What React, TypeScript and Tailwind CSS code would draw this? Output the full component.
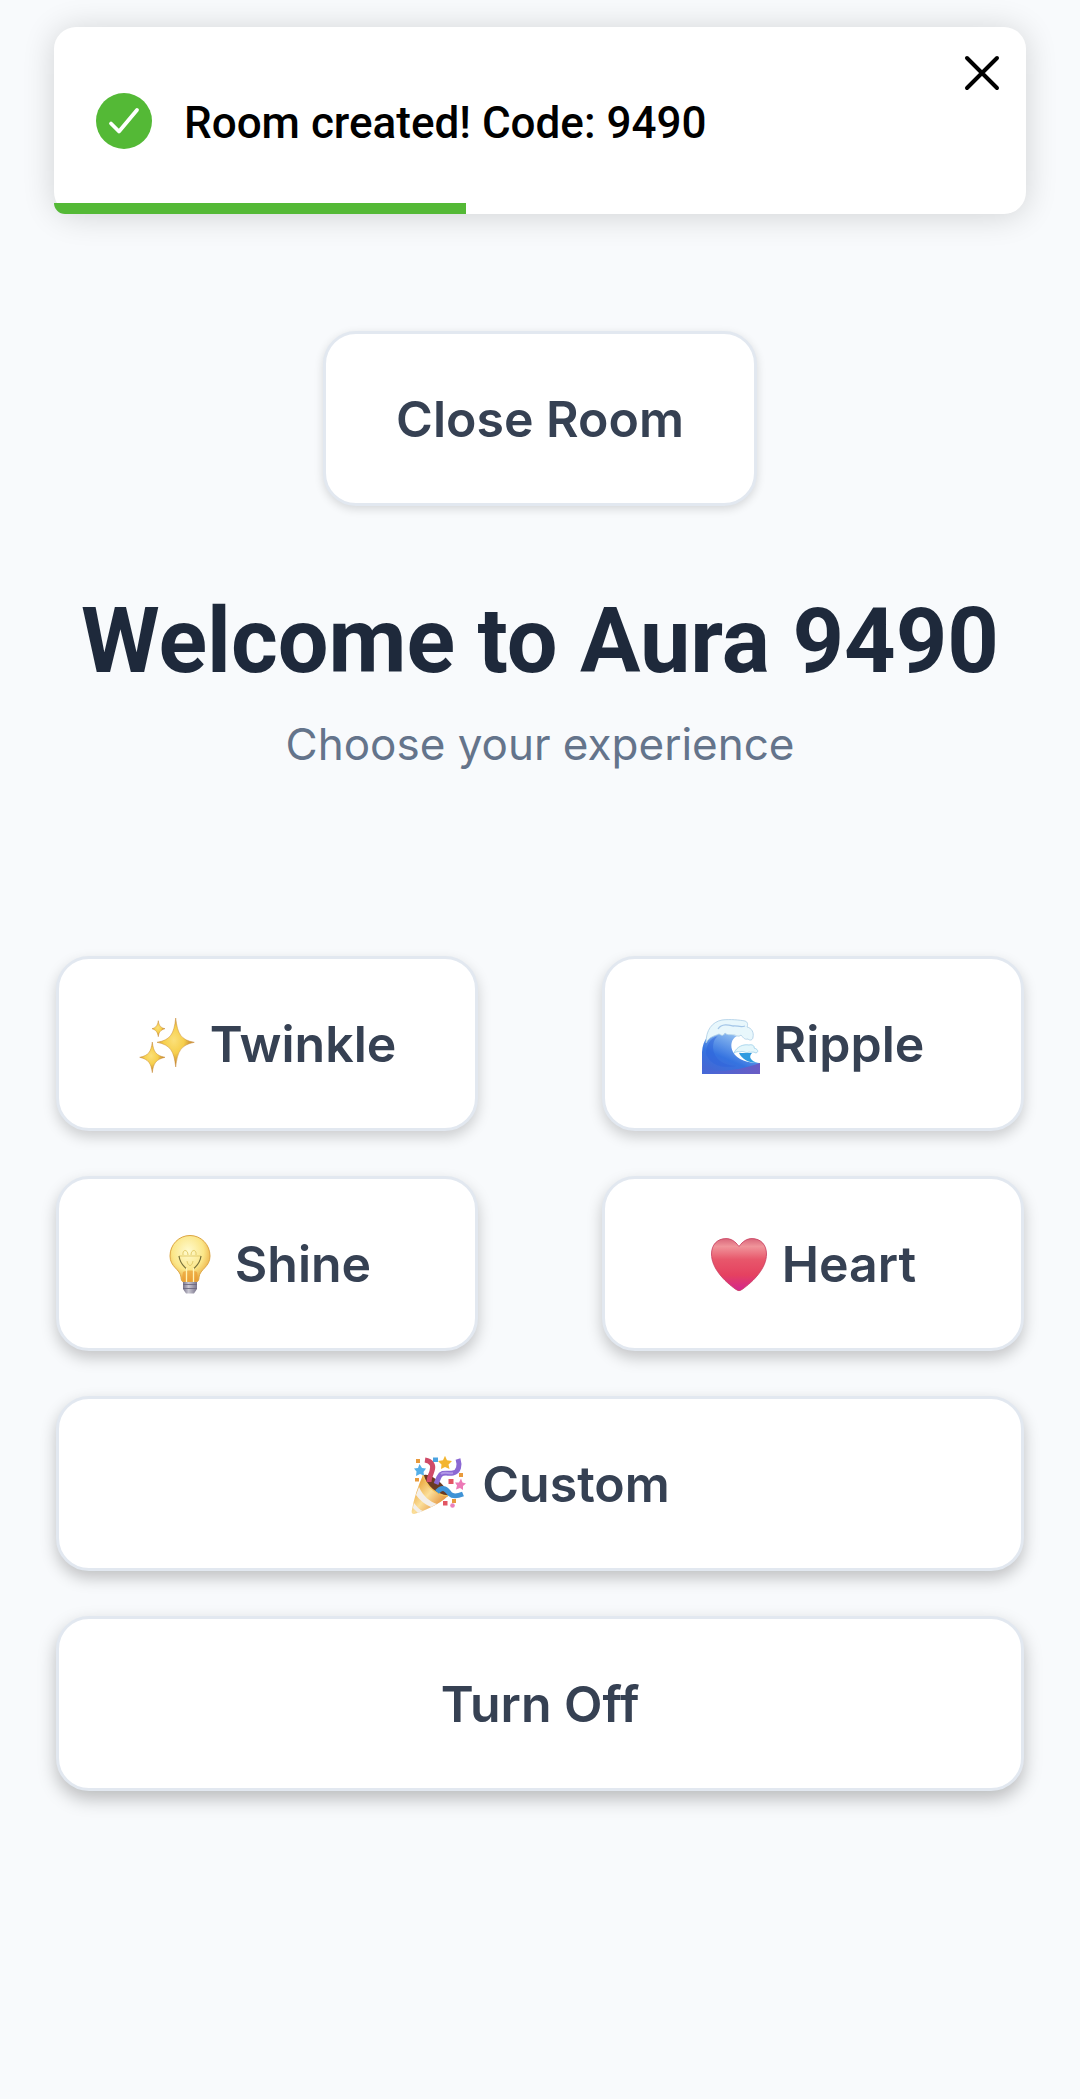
import { clsx } from 'clsx';
import { useState, type ReactNode } from 'react';

const SparklesIcon = () => (
  <svg viewBox="0 0 58 58" className="size-[58px] shrink-0 overflow-visible" aria-hidden="true">
    <defs>
      <radialGradient id="sparkle" cx="0.45" cy="0.45" r="0.55">
        <stop offset="0" stopColor="#fbe07a" />
        <stop offset="0.5" stopColor="#f6cf4c" />
        <stop offset="1" stopColor="#b9772a" />
      </radialGradient>
    </defs>
    <g fill="url(#sparkle)" stroke="#c88a35" strokeWidth="0.5">
      <path d="M37.7 2C39.5 18 43 24 56.3 26.3C43 29 39.5 35 37.7 51C36 35 32.5 29 19 26.3C32.5 24 36 18 37.7 2Z" />
      <path d="M14.3 26C15.5 36 18 39.5 27 41.3C18 43.5 15.5 47 14.3 56.7C13 47 10.5 43.5 1.7 41.3C10.5 39.5 13 36 14.3 26Z" />
      <path d="M20.3 4.7C21 9.5 22.5 11.7 27 12.7C22.5 14 21 16 20.3 20.7C19.5 16 18 14 14 12.7C18 11.7 19.5 9.5 20.3 4.7Z" />
    </g>
  </svg>
);

const WaveIcon = () => (
  <svg viewBox="0 0 58 58" className="size-[58px] shrink-0" aria-hidden="true">
    <defs>
      <linearGradient id="wave" x1="0" y1="1" x2="0.6" y2="0">
        <stop offset="0" stopColor="#4a63cf" />
        <stop offset="0.45" stopColor="#3573e0" />
        <stop offset="1" stopColor="#9cc8f3" />
      </linearGradient>
      <linearGradient id="sea" x1="0" y1="0" x2="1" y2="0">
        <stop offset="0" stopColor="#4468d8" />
        <stop offset="1" stopColor="#6a5cc4" />
      </linearGradient>
    </defs>
    <path d="M0 58V36C1 22 8 15 20 16L35 20C29 23 28 30 31 36C35 44 46 47 58 47V58Z" fill="url(#wave)" />
    <path d="M0 58V53C20 57 38 54 58 47V58Z" fill="url(#sea)" />
    <path d="M4 38C8 48 18 53 34 50C20 49 12 43 11 32C11 26 13 22 16 20C8 22 4 29 4 38Z" fill="#2f65da" opacity="0.55" />
    <path d="M37 37C40 43 46 47 56 47C49 45 46 41 50 37Z" fill="#2f9be0" />
    <path
      d="M4 27C4 14 10 6 20 4C28 3 38 4 43 5C46 6 46 9 45 11C50 12 52 17 51 21C51 24 48 25 46 23C42 24 41 21 39 19C36 22 33 18 31 19C29 18 26 20 23 17C21 21 19 19 17 18C13 20 8 20 4 27Z"
      fill="#e8f7fc"
      stroke="#a9cbe5"
      strokeWidth="0.8"
    />
    <path d="M16 13C20 7 27 9 31 10C35 9 38 12 43 10" fill="none" stroke="#a4c6e8" strokeWidth="1.3" />
    <path
      d="M32 37C35 30 42 28 47 29C50 28 53 30 52 32C56 33 57 36 54 37C51 35 49 37 47 36C44 38 41 34 38 36C36 35 34 36 32 37Z"
      fill="#e3f6fb"
      stroke="#8fc9e6"
      strokeWidth="0.7"
    />
  </svg>
);

const BulbIcon = () => (
  <svg viewBox="0 0 58 58" className="size-[58px] shrink-0 overflow-visible" aria-hidden="true">
    <defs>
      <radialGradient id="glass" cx="0.45" cy="0.35" r="0.65">
        <stop offset="0" stopColor="#fffbd0" />
        <stop offset="0.6" stopColor="#fbe688" />
        <stop offset="1" stopColor="#e9a63a" />
      </radialGradient>
      <linearGradient id="socket" x1="0" y1="0" x2="1" y2="0">
        <stop offset="0" stopColor="#77738a" />
        <stop offset="0.4" stopColor="#c9c7d2" />
        <stop offset="1" stopColor="#77738a" />
      </linearGradient>
    </defs>
    <path
      d="M27 -0.5C38 -0.5 47 8.5 47 20C47 31 37 33 36 41C36 44 35 46 33 46H21C19 46 18 44 18 41C17 33 7 31 7 20C7 8.5 16 -0.5 27 -0.5Z"
      fill="url(#glass)"
      stroke="#dca542"
      strokeWidth="1"
    />
    <path d="M20 36C19 40 19 43 20 45H34C35 43 35 40 34 36C30 34 24 34 20 36Z" fill="#e99a30" opacity="0.65" />
    <path d="M16 20H38M20 19C19 13 25 13 25 19M28 19C28 13 34 13 33 19M24 25C25 31 29 31 30 25" fill="none" stroke="#e3cc6c" strokeWidth="1" />
    <path d="M16 20C17 28 21 30 23.5 33M38 20C37 28 33 30 30.5 33" fill="none" stroke="#77703b" strokeWidth="1.2" />
    <path d="M23.5 32V46M30.5 32V46" stroke="#fff3b4" strokeWidth="1.3" />
    <path d="M20 46H34V53L31 57.5H23L20 53Z" fill="url(#socket)" />
    <path d="M20 48.5H34M20 52.5H34" stroke="#6d6a80" strokeWidth="0.9" />
  </svg>
);

const HeartIcon = () => (
  <svg viewBox="0 0 58 58" className="size-[58px] shrink-0" aria-hidden="true">
    <defs>
      <linearGradient id="heart" x1="0" y1="0" x2="0" y2="1">
        <stop offset="0" stopColor="#d9677a" />
        <stop offset="0.15" stopColor="#f0949a" />
        <stop offset="0.4" stopColor="#e8576b" />
        <stop offset="0.7" stopColor="#e54160" />
        <stop offset="1" stopColor="#d3268f" />
      </linearGradient>
    </defs>
    <path
      d="M29 10.5C25 5 21 2.6 16 2.6C7 2.6 1.5 9 1.5 18C1.5 32 14 45 26 53.5Q29 56 32 53.5C44 45 56.5 32 56.5 18C56.5 9 51 2.6 42 2.6C37 2.6 33 5 29 10.5Z"
      fill="url(#heart)"
      stroke="#c83a5c"
      strokeWidth="0.8"
    />
  </svg>
);

const PartyIcon = () => (
  <svg viewBox="0 0 58 58" className="size-[58px] shrink-0" aria-hidden="true">
    <defs>
      <linearGradient id="cone" x1="0" y1="0.3" x2="0.8" y2="1">
        <stop offset="0" stopColor="#e9a030" />
        <stop offset="0.45" stopColor="#fbdf9a" />
        <stop offset="1" stopColor="#dd7d22" />
      </linearGradient>
    </defs>
    <path d="M13 20C17 14 40 31 38 40C28 40 16 32 13 20Z" fill="#6b3a22" />
    <path d="M13 19C16 30 26 39 38 40C30 48 12 56 4 58C2 58 1.5 57 1.7 55C4 42 8 30 13 19Z" fill="url(#cone)" />
    <path d="M9 31C13 40 20 46 27 48L21 51C14 48 9 43 6 39ZM4 47C7 51 10 54 13 55L8 57L3 52Z" fill="#f3efea" />
    <path d="M13 19C16 30 26 39 38 40" fill="none" stroke="#f4c35b" strokeWidth="1.5" />
    <g fill="none" strokeWidth="5">
      <path d="M15 4C22 5 24 10 22 15C21 19 19 21 19 26" stroke="#cf4a68" />
      <path d="M48 3C50 9 49 16 43 17C37 18 32 15 29 21L26 28" stroke="#8b68d3" />
      <path d="M27 36C33 29 37 34 40 38C43 41 48 40 53 38" stroke="#3f93d6" />
    </g>
    <path d="M43 17C38 18 35 15 31 18" fill="none" stroke="#b197e6" strokeWidth="2" />
    <path d="M35 -0.2L37 4.3L42 5L38.5 8.5L39.5 13L35 11L31 13L31.5 8.5L28 5L33 4.3Z" fill="#f3b52e" />
    <path d="M9.5 8L12 12L16 12.5L13.5 16L14 19.5L10 18L6 20L6.5 15.5L4 12.5L8 12Z" fill="#53aee8" />
    <path d="M51 22.5L52.5 26.5L56 27.5L53 30L53 34L50 32L46 33.5L47 29.5L45 26.5L49 26.5Z" fill="#ec79b6" />
    <path d="M6 3h4v4H6ZM49 17h4v4H49ZM5 22h4v3.5H5ZM42 43h4v4H42Z" fill="#e89a3c" />
    <path d="M23 1.5h5v4.5H23Z" fill="#4aa3e0" />
    <path d="M38.5 23h5v5H38.5ZM33 45h4.5v4.5H33Z" fill="#e25563" />
    <circle cx="42.5" cy="49.5" r="2.3" fill="#ea80bd" />
  </svg>
);

const ToastCheckIcon = () => (
  <svg viewBox="0 0 56 56" className="size-14 shrink-0" aria-hidden="true">
    <circle cx="28" cy="28" r="28" fill="#54b936" />
    <path d="M15 30.5L23 38.5L41 17" fill="none" stroke="#fff" strokeWidth="3.8" strokeLinecap="round" strokeLinejoin="round" />
  </svg>
);

type RoomButtonProps = {
  children: ReactNode;
  icon?: ReactNode;
  className?: string;
};

const RoomButton = ({ children, icon, className }: RoomButtonProps) => (
  <button
    type="button"
    className={clsx(
      'flex items-center justify-center gap-3.5 rounded-[33px] border-3 border-slate-200 bg-white px-[70px] pt-[53px] pb-[51px] text-[50px] leading-[65px] font-semibold text-gray-700',
      className,
    )}
  >
    {icon}
    {children}
  </button>
);

const Toast = ({ onClose }: { onClose: () => void }) => (
  <div
    role="status"
    className="relative flex h-[187px] items-center gap-8 rounded-[22px] bg-white px-[42px] font-['Roboto',sans-serif] shadow-[0_2px_32px_rgba(0,0,0,0.16)]"
  >
    <ToastCheckIcon />
    <p className="pt-1 text-[44px] leading-[56px] font-medium text-black">Room created! Code: 9490</p>
    <button type="button" aria-label="Close" onClick={onClose} className="absolute top-7 right-[26px]">
      <svg viewBox="0 0 36 36" className="size-9" aria-hidden="true">
        <path d="M3 3L33 33M33 3L3 33" stroke="#000" strokeWidth="4" strokeLinecap="round" />
      </svg>
    </button>
    <div className="absolute bottom-0 left-0 h-[11px] w-[42.4%] rounded-bl-[11px] bg-[#54b936]" />
  </div>
);

export default function App() {
  const [showToast, setShowToast] = useState(true);

  return (
    <div className="min-h-screen bg-slate-50 font-['Inter',sans-serif]">
      <div className="h-[214px] px-[54px] pt-[27px]">{showToast && <Toast onClose={() => setShowToast(false)} />}</div>
      <main className="flex flex-col px-14 pt-[117px] pb-14">
        <RoomButton className="self-center shadow-[0_3px_10px_rgba(0,0,0,0.14)]">Close Room</RoomButton>
        <h1 className="mt-[86px] text-center font-['Roboto',sans-serif] text-[90px] leading-[100px] font-bold text-[#1e293b]">
          Welcome to Aura 9490
        </h1>
        <p className="mt-6 text-center text-[44px] leading-[56px] text-[#64748b]">Choose your experience</p>
        <div className="mt-[184px] grid grid-cols-2 gap-x-[124px] gap-y-[45px]">
          <RoomButton icon={<SparklesIcon />} className="shadow-[0_6px_14px_rgba(0,0,0,0.18)]">
            Twinkle
          </RoomButton>
          <RoomButton icon={<WaveIcon />} className="shadow-[0_6px_14px_rgba(0,0,0,0.18)]">
            Ripple
          </RoomButton>
          <RoomButton icon={<BulbIcon />} className="shadow-[0_7px_15px_rgba(0,0,0,0.21)]">
            Shine
          </RoomButton>
          <RoomButton icon={<HeartIcon />} className="shadow-[0_7px_15px_rgba(0,0,0,0.21)]">
            Heart
          </RoomButton>
          <RoomButton icon={<PartyIcon />} className="col-span-2 shadow-[0_7px_16px_rgba(0,0,0,0.23)]">
            Custom
          </RoomButton>
          <RoomButton className="col-span-2 shadow-[0_8px_18px_rgba(0,0,0,0.25)]">Turn Off</RoomButton>
        </div>
      </main>
    </div>
  );
}
